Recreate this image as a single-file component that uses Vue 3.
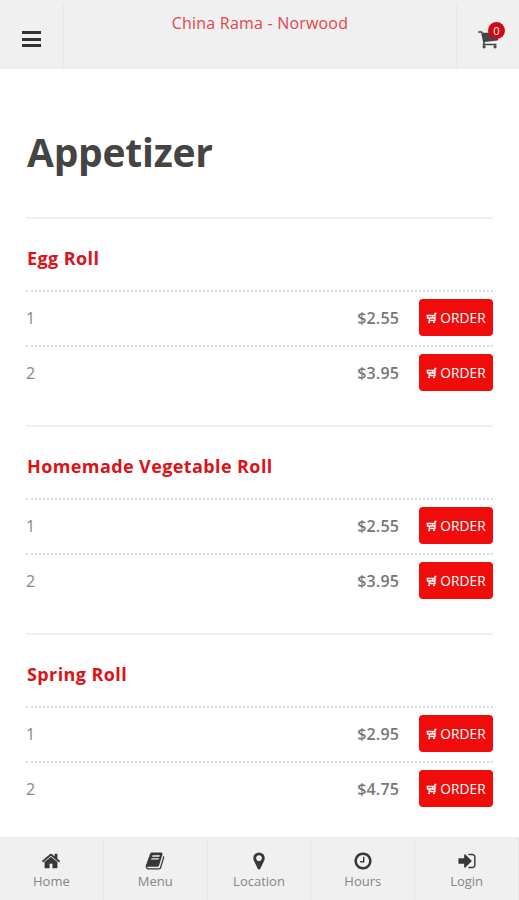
<template>
  <div class="app">
    <header class="top-bar">
      <button class="menu-btn" title="Open menu">
        <span></span>
        <span></span>
        <span></span>
      </button>
      <div class="store-name">China Rama - Norwood</div>
      <button class="cart-btn" title="Cart">
        <svg class="cart-icon" viewBox="0 0 1792 1792"><path :d="icons.cart" /></svg>
        <span class="badge">0</span>
      </button>
    </header>

    <main class="content">
      <h1>Appetizer</h1>
      <section v-for="item in items" :key="item.name" class="item">
        <h2>{{ item.name }}</h2>
        <div v-for="(price, i) in item.prices" :key="i" class="option">
          <span class="label">{{ i + 1 }}</span>
          <span class="price">${{ price }}</span>
          <button class="order-btn">
            <svg class="order-icon" viewBox="0 0 11 12">
              <path d="M10.500 1.500H9V8.500H2.500M0.500 3.500H9M1.500 3.500v2.500H9M3.500 6v2.500M6.500 3.500v2.500" />
              <circle cx="3" cy="10.300" r="1" />
              <circle cx="8" cy="10.300" r="1" />
            </svg>
            <span>ORDER</span>
          </button>
        </div>
      </section>
    </main>

    <!-- Bottom tabs -->
    <nav class="tab-bar">
      <a v-for="tab in tabs" :key="tab.label" class="tab">
        <svg viewBox="0 0 1792 1792"><path :d="tab.icon" /></svg>
        <span>{{ tab.label }}</span>
      </a>
    </nav>
  </div>
</template>

<script setup>
const icons = {
  cart: 'M704 1536q0 52-38 90t-90 38-90-38-38-90 38-90 90-38 90 38 38 90zm896 0q0 52-38 90t-90 38-90-38-38-90 38-90 90-38 90 38 38 90zm128-1088v512q0 24-16.500 42.500t-40.500 21.500l-1044 122q13 60 13 70 0 16-24 64h920q26 0 45 19t19 45-19 45-45 19h-1024q-26 0-45-19t-19-45q0-11 8-31.500t16-36 21.500-40 15.500-29.500l-177-823h-204q-26 0-45-19t-19-45 19-45 45-19h256q16 0 28.500 6.500t19.500 15.500 13 24.500 8 26 5.500 29.500 4.500 26h1201q26 0 45 19t19 45z',
  home: 'M1472 992v480q0 26-19 45t-45 19h-384v-384h-256v384h-384q-26 0-45-19t-19-45v-480q0-1 .5-3t.5-3l575-474 575 474q1 2 1 6zm223-69l-62 74q-8 9-21 11h-3q-13 0-21-7l-692-577-692 577q-12 8-24 7-13-2-21-11l-62-74q-8-10-7-23.500t11-21.500l719-599q32-26 76-26t76 26l244 204v-195q0-14 9-23t23-9h192q14 0 23 9t9 23v408l219 182q10 8 11 21.500t-7 23.500z',
  book: 'M1703 478q40 57 18 129l-275 906q-19 64-76.500 107.500t-122.500 43.500h-923q-77 0-148.500-53.500t-99.500-131.500q-24-67-2-127 0-4 3-27t4-37q1-8-3-21.500t-3-19.500q2-11 8-21t16.500-23.500 16.500-23.500q23-38 45-91.500t30-91.500q3-10 .5-30t-.5-28q3-11 17-28t17-23q21-36 42-92t25-90q1-9-2.500-32t.5-28q4-13 22-30.500t22-22.500q19-26 42.500-84.500t27.500-96.500q1-8-3-25.500t-2-26.500q2-8 9-18t18-23 17-21q8-12 16.500-30.500t15-35 16-36 19.500-32 26.500-23.500 36-11.500 47.500 5.500l-1 3q38-9 51-9h761q74 0 114 56t18 130l-274 906q-36 119-71.500 153.500t-128.500 34.500h-869q-27 0-38 15-11 16-1 43 24 70 144 70h923q29 0 56-15.500t35-41.500l300-987q7-22 5-57 38 15 59 43zm-1064 2q-4 13 2 22.500t20 9.500h608q13 0 25.500-9.500t16.500-22.500l21-64q4-13-2-22.500t-20-9.500h-608q-13 0-25.500 9.500t-16.500 22.500zm-83 256q-4 13 2 22.500t20 9.500h608q13 0 25.500-9.500t16.500-22.500l21-64q4-13-2-22.500t-20-9.500h-608q-13 0-25.500 9.500t-16.500 22.500z',
  marker: 'M1152 640q0-106-75-181t-181-75-181 75-75 181 75 181 181 75 181-75 75-181zm256 0q0 109-33 179l-364 774q-16 33-47.500 52t-67.500 19-67.500-19-46.500-52l-365-774q-33-70-33-179 0-212 150-362t362-150 362 150 150 362z',
  clock: 'M1024 544v448q0 14-9 23t-23 9h-320q-14 0-23-9t-9-23v-64q0-14 9-23t23-9h224v-352q0-14 9-23t23-9h64q14 0 23 9t9 23zm416 352q0-148-73-273t-198-198-273-73-273 73-198 198-73 273 73 273 198 198 273 73 273-73 198-198 73-273zm224 0q0 209-103 385.500t-279.500 279.500-385.500 103-385.500-103-279.500-279.500-103-385.500 103-385.500 279.500-279.500 385.500-103 385.500 103 279.500 279.500 103 385.500z',
  login: 'M1312 896q0 26-19 45l-544 544q-19 19-45 19t-45-19-19-45v-288h-448q-26 0-45-19t-19-45v-384q0-26 19-45t45-19h448v-288q0-26 19-45t45-19 45 19l544 544q19 19 19 45zm352-352v704q0 119-84.500 203.500t-203.500 84.500h-320q-13 0-22.500-9.500t-9.500-22.500q0-4-1-20t-.5-26.500 3-23.500 10-19.500 20.500-6.500h320q66 0 113-47t47-113v-704q0-66-47-113t-113-47h-312l-11.500-1-11.500-3-8-5.500-7-9-2-13.500q0-4-1-20t-.5-26.500 3-23.500 10-19.500 20.500-6.500h320q119 0 203.500 84.500t84.500 203.500z'
};

const items = [
  { name: 'Egg Roll', prices: ['2.55', '3.95'] },
  { name: 'Homemade Vegetable Roll', prices: ['2.55', '3.95'] },
  { name: 'Spring Roll', prices: ['2.95', '4.75'] }
];

const tabs = [
  { label: 'Home', icon: icons.home },
  { label: 'Menu', icon: icons.book },
  { label: 'Location', icon: icons.marker },
  { label: 'Hours', icon: icons.clock },
  { label: 'Login', icon: icons.login }
];
</script>

<style>
body {
  margin: 0;
  background: #fff;
}
</style>

<style scoped>
.app {
  display: flex;
  flex-direction: column;
  height: 900px;
  overflow: hidden;
  font-family: "Open Sans", "Noto Sans", sans-serif;
  color: #444;
}

button {
  border: none;
  background: none;
  padding: 0;
  font-family: inherit;
  cursor: pointer;
}

.top-bar {
  display: flex;
  flex: none;
  height: 69px;
  box-sizing: border-box;
  padding-top: 4px;
  background: #f0f0f0;
}

.menu-btn {
  display: flex;
  flex-direction: column;
  justify-content: center;
  align-items: center;
  gap: 3.500px;
  width: 64px;
  padding-top: 5px;
  padding-right: 1px;
  border-right: 1px solid #e7e7e7;
}

.menu-btn span {
  width: 19px;
  height: 3px;
  background: #333;
}

.store-name {
  flex: 1;
  padding-top: 7px;
  text-align: center;
  font-size: 16px;
  line-height: 24px;
  letter-spacing: 0.200px;
  color: #e24549;
}

.cart-btn {
  position: relative;
  width: 63px;
  border-left: 1px solid #e7e7e7;
}

.cart-icon {
  display: block;
  width: 22px;
  height: 22px;
  margin: 5px 0 0 20px;
  fill: #444;
}

.badge {
  position: absolute;
  top: 18px;
  left: 31px;
  width: 17px;
  height: 17px;
  border-radius: 50%;
  background: #cf0a10;
  color: #fff;
  font-size: 11px;
  line-height: 17px;
  text-align: center;
}

.content {
  flex: 1;
  min-height: 0;
  overflow: hidden;
  padding: 0 26px;
}

h1 {
  margin: 0;
  padding: 55px 0 37px 1px;
  font-size: 39px;
  line-height: 56px;
  font-weight: 700;
  letter-spacing: -0.250px;
  color: #444;
}

.item {
  border-top: 2px solid #f0f0f0;
  padding-bottom: 25px;
}

h2 {
  margin: 0;
  padding: 27px 0 20px 1px;
  font-size: 18px;
  line-height: 24px;
  font-weight: 700;
  letter-spacing: 0.400px;
  color: #dd1217;
}

.option {
  display: flex;
  align-items: center;
  height: 55px;
  box-sizing: border-box;
  padding-bottom: 2px;
  border-top: 2px dotted #ddd;
  font-size: 16px;
  color: #888;
}

.label {
  flex: 1;
}

.price {
  font-weight: 600;
  letter-spacing: 0.150px;
  color: #777;
}

.order-btn {
  display: flex;
  align-items: center;
  justify-content: center;
  gap: 3px;
  width: 74px;
  height: 37px;
  margin-left: 20px;
  border-radius: 4px;
  background: #f00c0a;
  color: #fff;
  font-size: 13.800px;
}

.order-icon {
  width: 11px;
  height: 12px;
  fill: #fff;
}

.order-icon path {
  fill: none;
  stroke: #fff;
  stroke-width: 1.300;
}

.tab-bar {
  display: flex;
  flex: none;
  height: 63px;
  box-sizing: border-box;
  border-top: 1px solid #eaeaea;
  background: #f0f0f0;
}

.tab {
  display: flex;
  flex: 1;
  flex-direction: column;
  align-items: center;
  padding-top: 13px;
  border-right: 1px solid #e7e7e7;
  font-size: 13px;
  line-height: 20px;
  color: #858585;
}

.tab svg {
  width: 20px;
  height: 20px;
  fill: #383838;
}
</style>
